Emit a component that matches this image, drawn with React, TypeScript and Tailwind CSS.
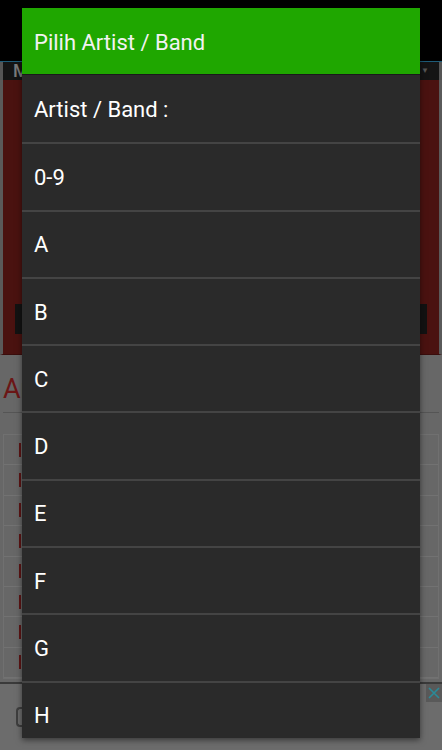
import React from "react";

const rows = ["Artist / Band :", "0-9", "A", "B", "C", "D", "E", "F", "G", "H"];

export default function App() {
  return (
    <div
      className="relative w-[442px] h-[750px] overflow-hidden bg-[#666666]"
      style={{ fontFamily: "Roboto, 'Noto Sans', sans-serif" }}
    >
      {/* Background page (dimmed) */}
      <div className="flex flex-col w-full h-full">
        <div className="h-[61px] bg-black shrink-0" />
        <div className="h-[1px] bg-[#1d5b78] shrink-0" />
        <div className="h-[18px] bg-[#141414] shrink-0 flex items-center px-[10px] border-x-[3px] border-[#555]">
          <span className="text-[18px] leading-none text-[#7a7a7a] font-medium">M</span>
          <span className="ml-auto text-[8px] text-[#555]">▼</span>
        </div>
        <div className="h-[275px] shrink-0 bg-[#4a1210] border-x-[3px] border-[#5a5a5a] border-b border-b-[#3a0d0c] flex flex-col justify-end px-[12px] pb-[20px]">
          <div className="h-[30px] bg-[#121212]" />
        </div>
        <div className="flex-1 flex flex-col px-[3px] bg-[#676767]">
          <div className="h-[58px] flex items-end pb-[9px] border-b border-[#555] shrink-0">
            <span className="text-[27px] leading-none text-[#6b1616]">Artist / Band</span>
          </div>
          <div className="mt-[21px] h-[245px] border border-[#707070] flex flex-col">
            {Array.from({ length: 8 }).map((_, i) => (
              <div key={i} className="h-[31px] border-b border-[#727272] flex items-center px-[15px]">
                <div className="w-[2px] h-[14px] bg-[#5e1414]" />
              </div>
            ))}
          </div>
        </div>
        <div className="h-[68px] shrink-0 bg-[#6c6c6c] border-t-2 border-[#3a3a3a] relative flex items-center px-[16px]">
          <div className="w-[10px] h-[20px] border-2 border-[#3f3f3f] rounded-l-[4px] border-r-0" />
          <div className="absolute right-0 top-0 w-[16px] h-[18px] bg-[#595959] flex items-center justify-center">
            <svg width="12" height="12" viewBox="0 0 12 12">
              <path d="M1 1 L11 11 M11 1 L1 11" stroke="#2a8a98" strokeWidth="1.6" />
            </svg>
          </div>
        </div>
      </div>

      {/* Dialog */}
      <div className="absolute left-[22px] top-[8px] w-[398px] h-[730px] overflow-hidden bg-[#2a2a2a] shadow-[0_2px_6px_rgba(0,0,0,0.5)]">
        <div className="h-[67px] bg-[#1fa700] flex items-center px-[12px] pt-[3px] border-b border-[#1a1a1a]">
          <span className="text-[22px] text-[#f2f2f2] leading-none">Pilih Artist / Band</span>
        </div>
        {rows.map((r, i) => (
          <div
            key={r}
            className={`h-[67.3px] flex items-center px-[12px] pt-[2px] ${i > 0 ? "border-t-2 border-[#444444]" : ""}`}
          >
            <span className="text-[22px] text-white leading-none">{r}</span>
          </div>
        ))}
      </div>
    </div>
  );
}
